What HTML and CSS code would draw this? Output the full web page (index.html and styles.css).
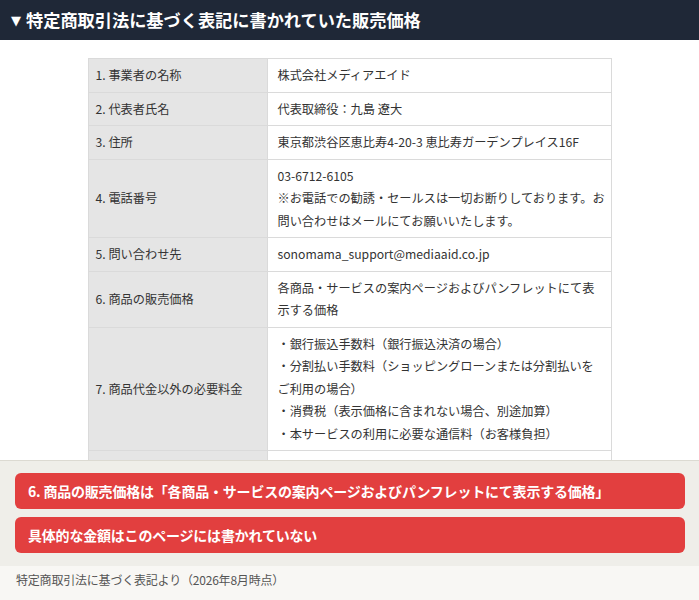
FILE: index.html
```html
<!DOCTYPE html>
<html lang="ja">
<head>
<meta charset="utf-8">
<title>特定商取引法に基づく表記に書かれていた販売価格</title>
<link rel="stylesheet" href="styles.css">
</head>
<body>
<div class="page">
  <header class="bar">
    <span class="tri">▼</span>
    <h1 class="bar-title">特定商取引法に基づく表記に書かれていた販売価格</h1>
  </header>
  <main class="content">
    <table class="law">
      <colgroup><col class="col-label"><col class="col-value"></colgroup>
      <tbody>
        <tr><th>1. 事業者の名称</th><td>株式会社メディアエイド</td></tr>
        <tr><th>2. 代表者氏名</th><td>代表取締役：九島 遼大</td></tr>
        <tr><th>3. 住所</th><td>東京都渋谷区恵比寿4-20-3 恵比寿ガーデンプレイス16F</td></tr>
        <tr><th>4. 電話番号</th><td>03-6712-6105<br>※お電話での勧誘・セールスは一切お断りしております。お<br>問い合わせはメールにてお願いいたします。</td></tr>
        <tr><th>5. 問い合わせ先</th><td>sonomama_support@mediaaid.co.jp</td></tr>
        <tr><th>6. 商品の販売価格</th><td>各商品・サービスの案内ページおよびパンフレットにて表<br>示する価格</td></tr>
        <tr><th>7. 商品代金以外の必要料金</th><td>・銀行振込手数料（銀行振込決済の場合）<br>・分割払い手数料（ショッピングローンまたは分割払いを<br>ご利用の場合）<br>・消費税（表示価格に含まれない場合、別途加算）<br>・本サービスの利用に必要な通信料（お客様負担）</td></tr>
        <tr><th>8. 代金の支払方法</th><td>【クレジットカード】<br>VISA・Mastercard・JCB・AMEX<br>【銀行振込】<br>指定口座へお振込みください</td></tr>
      </tbody>
    </table>
  </main>
  <section class="notes">
    <p class="note">6. 商品の販売価格は「各商品・サービスの案内ページおよびパンフレットにて表示する価格」</p>
    <p class="note">具体的な金額はこのページには書かれていない</p>
  </section>
  <footer class="source">特定商取引法に基づく表記より（2026年8月時点）</footer>
</div>
</body>
</html>
```
FILE: styles.css
```css
* { box-sizing: border-box; }
html, body { margin: 0; padding: 0; }
body {
  width: 699px;
  height: 600px;
  overflow: hidden;
  background: #ffffff;
  font-family: "Noto Sans CJK JP", "Noto Sans", sans-serif;
  color: #333333;
}
.page {
  display: flex;
  flex-direction: column;
  height: 600px;
}
.bar {
  flex: 0 0 40px;
  display: flex;
  align-items: center;
  gap: 5px;
  padding: 0 11px;
  background: #1f2837;
  color: #ffffff;
}
.tri {
  font-size: 13px;
  line-height: 1;
  font-family: "DejaVu Sans", sans-serif;
}
.bar-title {
  margin: 0;
  font-size: 17.2px;
  font-weight: 700;
  line-height: 40px;
}
.content {
  flex: 1 1 auto;
  overflow: hidden;
  padding-top: 18px;
}
.law {
  width: 524px;
  margin: 0 auto;
  border-collapse: collapse;
  table-layout: fixed;
  font-size: 12.2px;
  line-height: 22.5px;
}
.col-label { width: 179px; }
.law th, .law td {
  border: 1px solid #dadada;
  padding: 5px 4px 5px 7px;
  text-align: left;
  vertical-align: middle;
  font-weight: 400;
  color: #333333;
  white-space: nowrap;
}
.law th { background: #e5e5e5; }
.law td { background: #ffffff; padding-left: 10px; }
.notes {
  flex: 0 0 auto;
  display: flex;
  flex-direction: column;
  gap: 8px;
  padding: 12px 14px 13px 15px;
  background: #efeee9;
  border-top: 1px solid #dcdad2;
}
.note {
  margin: 0;
  height: 36px;
  display: flex;
  align-items: center;
  padding: 0 13px;
  background: #e23f3f;
  border-radius: 6px;
  color: #ffffff;
  font-size: 14px;
  font-weight: 700;
  letter-spacing: -0.2px;
}
.source {
  flex: 0 0 34px;
  padding: 4px 16px 0;
  background: #f8f7f4;
  color: #555555;
  font-size: 12px;
  line-height: 20px;
  letter-spacing: -0.2px;
}
```
